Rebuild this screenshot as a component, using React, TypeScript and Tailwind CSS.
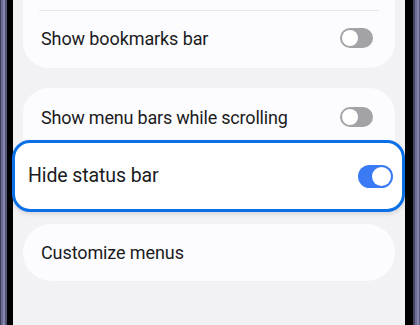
function Toggle({on, big}: {on?: boolean; big?: boolean}) {
    if (on) {
        return (
            <div className={`flex items-center justify-end rounded-full bg-[#3a7af5] px-[2px] ${big ? "h-[23px] w-[35px]" : "h-[20px] w-[33px]"}`}>
                <div className="h-[19px] w-[19px] rounded-full bg-white"/>
            </div>
        )
    }
    return (
        <div className="flex h-[20px] w-[33px] items-center rounded-full bg-[#a3a3a7] px-[2px]">
            <div className="h-[16px] w-[16px] rounded-full bg-white"/>
        </div>
    )
}

function Bezel({side}: {side: "left" | "right"}) {
    const strips = side === "left"
        ? ["w-[1px] bg-[#3c3c52]", "w-[2px] bg-[#6a6a94]", "w-[2px] bg-[#8585ac]", "w-[2px] bg-[#535378]", "w-[6px] bg-black"]
        : ["w-[8px] bg-black", "w-[2px] bg-[#45455f]", "w-[2px] bg-[#6e6e98]", "w-[2px] bg-[#8585ac]", "w-[1px] bg-[#5a5a80]"]
    return (
        <div className="flex h-full shrink-0">
            {strips.map((s, i) => <div key={i} className={`h-full ${s}`}/>)}
        </div>
    )
}

export default function App() {
    return (
        <div className="flex h-[325px] w-[420px] overflow-hidden bg-black"
             style={{fontFamily: "Roboto, 'Noto Sans', sans-serif"}}>
            <Bezel side="left"/>
            <div className="flex h-full w-[392px] shrink-0 flex-col bg-[#f2f2f4] text-[#1b1b1d]">
                {/* card 1 */}
                <div className="mx-[10px] h-[68px] rounded-b-[26px] bg-[#fcfcfe]">
                    <div className="mx-[16px] h-[11px] border-b border-[#e6e6e9]"/>
                    <div className="flex h-[56px] items-center justify-between pl-[18px] pr-[22px] pb-[2px]">
                        <span className="text-[18px] tracking-[-0.1px]">Show bookmarks bar</span>
                        <Toggle/>
                    </div>
                </div>

                {/* card 2 */}
                <div className="mx-[10px] mt-[20px] rounded-t-[26px] bg-[#fcfcfe]">
                    <div className="flex h-[52px] items-center justify-between pl-[18px] pr-[22px] pt-[6px]">
                        <span className="text-[18px] tracking-[-0.2px]">Show menu bars while scrolling</span>
                        <Toggle/>
                    </div>
                    <div className="-ml-[11px] -mr-[10px] flex h-[72px] items-center justify-between rounded-[18px] border-[3.5px] border-[#0b6fe8] bg-white pl-[13px] pr-[9px] shadow-[0_2px_4px_rgba(0,0,0,0.12)]">
                        <span className="text-[19.5px] tracking-[-0.1px]">Hide status bar</span>
                        <Toggle on big/>
                    </div>
                </div>

                {/* card 3 */}
                <div className="mx-[10px] mt-[12px] flex h-[57px] items-center rounded-[28px] bg-[#fcfcfe] pl-[18px]">
                    <span className="text-[18px] tracking-[-0.1px]">Customize menus</span>
                </div>
            </div>
            <Bezel side="right"/>
        </div>
    )
}
